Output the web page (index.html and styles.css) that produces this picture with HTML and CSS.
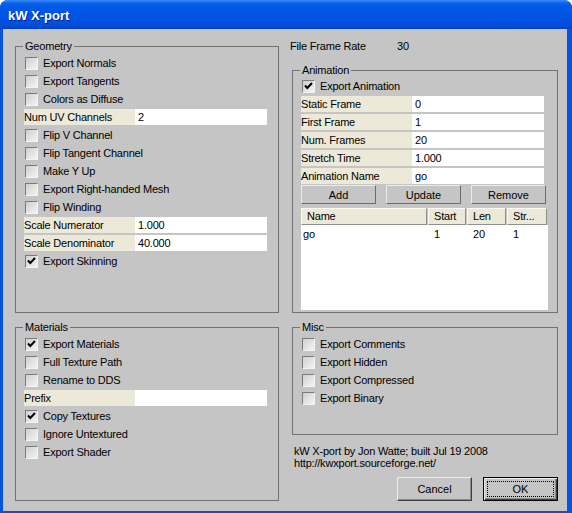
FILE: index.html
```html
<!DOCTYPE html>
<html lang="en">
<head>
    <meta charset="UTF-8">
    <title>kW X-port</title>
    <link rel="stylesheet" href="styles.css">
</head>
<body>
    <div class="window">
        <div class="titlebar"><span class="title">kW X-port</span></div>

        <div class="client">
            <div class="col col-left">
                <fieldset class="group geometry">
                    <legend>Geometry</legend>
                    <div class="check"><span class="box"></span>Export Normals</div>
                    <div class="check"><span class="box"></span>Export Tangents</div>
                    <div class="check"><span class="box"></span>Colors as Diffuse</div>
                    <div class="field"><span class="field-label">Num UV Channels</span><span class="field-input">2</span></div>
                    <div class="check"><span class="box"></span>Flip V Channel</div>
                    <div class="check"><span class="box"></span>Flip Tangent Channel</div>
                    <div class="check"><span class="box"></span>Make Y Up</div>
                    <div class="check"><span class="box"></span>Export Right-handed Mesh</div>
                    <div class="check"><span class="box"></span>Flip Winding</div>
                    <div class="field"><span class="field-label">Scale Numerator</span><span class="field-input">1.000</span></div>
                    <div class="field"><span class="field-label">Scale Denominator</span><span class="field-input">40.000</span></div>
                    <div class="check"><span class="box checked"></span>Export Skinning</div>
                </fieldset>

                <fieldset class="group materials">
                    <legend>Materials</legend>
                    <div class="check"><span class="box checked"></span>Export Materials</div>
                    <div class="check"><span class="box"></span>Full Texture Path</div>
                    <div class="check"><span class="box"></span>Rename to DDS</div>
                    <div class="field"><span class="field-label">Prefix</span><span class="field-input"></span></div>
                    <div class="check"><span class="box checked"></span>Copy Textures</div>
                    <div class="check"><span class="box"></span>Ignore Untextured</div>
                    <div class="check"><span class="box"></span>Export Shader</div>
                </fieldset>
            </div>

            <div class="col col-right">
                <div class="frame-rate"><span class="fr-label">File Frame Rate</span><span>30</span></div>

                <fieldset class="group animation">
                    <legend>Animation</legend>
                    <div class="check"><span class="box checked"></span>Export Animation</div>
                    <div class="field"><span class="field-label">Static Frame</span><span class="field-input">0</span></div>
                    <div class="field"><span class="field-label">First Frame</span><span class="field-input">1</span></div>
                    <div class="field"><span class="field-label">Num. Frames</span><span class="field-input">20</span></div>
                    <div class="field"><span class="field-label">Stretch Time</span><span class="field-input">1.000</span></div>
                    <div class="field"><span class="field-label">Animation Name</span><span class="field-input">go</span></div>
                    <div class="btn-row">
                        <button class="btn">Add</button>
                        <button class="btn">Update</button>
                        <button class="btn">Remove</button>
                    </div>
                    <div class="list">
                        <div class="list-head">
                            <span>Name</span><span>Start</span><span>Len</span><span>Str...</span>
                        </div>
                        <div class="list-row">
                            <span class="c-name">go</span><span>1</span><span>20</span><span>1</span>
                        </div>
                    </div>
                </fieldset>

                <fieldset class="group misc">
                    <legend>Misc</legend>
                    <div class="check"><span class="box"></span>Export Comments</div>
                    <div class="check"><span class="box"></span>Export Hidden</div>
                    <div class="check"><span class="box"></span>Export Compressed</div>
                    <div class="check"><span class="box"></span>Export Binary</div>
                </fieldset>

                <div class="about">kW X-port by Jon Watte; built Jul 19 2008<br>http://kwxport.sourceforge.net/</div>

                <div class="dlg-buttons">
                    <button class="btn btn-lg">Cancel</button>
                    <button class="btn btn-lg btn-default"><span class="focus">OK</span></button>
                </div>
            </div>
        </div>
    </div>
</body>
</html>
```

FILE: styles.css
```css
* {
    box-sizing: border-box;
}

body {
    margin: 0;
    font-family: "Liberation Sans", Arial, sans-serif;
    font-size: 11px;
    letter-spacing: -0.2px;
    color: #000;
    background: #fff;
}

.window {
    display: flex;
    flex-direction: column;
    width: 572px;
    height: 513px;
    background: #0553e0;
    border-radius: 8px 8px 0 0;
    overflow: hidden;
}

.titlebar {
    height: 29px;
    padding-left: 8px;
    display: flex;
    align-items: center;
    background: linear-gradient(#3b8dff 0, #0d64e6 3px, #0058ea 7px, #0054e3 16px, #0050dc 24px, #0043c4 29px);
}

.title {
    color: #fff;
    font-weight: bold;
    font-size: 13px;
    letter-spacing: 0;
    text-shadow: 1px 1px #0a1e8c;
    margin-top: 2px;
}

.client {
    flex: 1;
    display: flex;
    margin: 0 5px 2px 3px;
    padding: 11px 0 0 12px;
    background: #c5c5c5;
    gap: 11px;
}

.col {
    display: flex;
    flex-direction: column;
}

.col-left {
    width: 264px;
}

.col-right {
    width: 268px;
}

/* group boxes */
.group {
    margin: 0;
    padding: 1px 8px 0 8px;
    border: 1px solid #727272;
    min-width: 0;
}

.group legend {
    padding: 0 2px;
    margin-left: -1px;
    height: 13px;
    line-height: 13px;
}

.geometry {
    height: 273px;
}

.materials {
    height: 180px;
    margin-top: 8px;
}

.animation {
    height: 249px;
    margin-left: 2px;
    padding-top: 0;
}

.misc {
    height: 114px;
    margin: 8px 0 0 2px;
}

/* checkbox rows */
.check {
    display: flex;
    align-items: center;
    height: 18px;
}

.box {
    width: 13px;
    height: 13px;
    margin: 0 5px 0 1px;
    border: 1px solid;
    border-color: #7b7b7b #f4f4f4 #f4f4f4 #7b7b7b;
    background: linear-gradient(135deg, #cfcfcf, #e9e9e9 70%, #f1f1f1);
}

.box.checked {
    background: url("data:image/svg+xml,%3Csvg xmlns='http://www.w3.org/2000/svg' width='11' height='11'%3E%3Cpath d='M2 4.5 L4.3 7 L9 2' fill='none' stroke='%23000' stroke-width='2'/%3E%3C/svg%3E") no-repeat center, linear-gradient(135deg, #cfcfcf, #e9e9e9 70%, #f1f1f1);
}

/* label + edit rows */
.field {
    display: flex;
    height: 18px;
    padding: 1px 0;
    line-height: 16px;
}

.field-label {
    width: 111px;
    background: #ece9d8;
}

.field-input {
    width: 132px;
    padding-left: 3px;
    background: #fff;
}

/* buttons */
.btn {
    font: inherit;
    color: #000;
    width: 75px;
    height: 19px;
    padding: 0;
    background: #c5c5c5;
    border: 1px solid;
    border-color: #ebebeb #6c6c6c #6c6c6c #ebebeb;
}

.btn-row {
    display: flex;
    gap: 10px;
}

.btn-lg {
    height: 24px;
    border-color: #ececec #404040 #404040 #ececec;
    box-shadow: inset -1px -1px #8a8a8a;
}

.btn-default {
    border: 1px solid #000;
    box-shadow: inset 1px 1px #ececec, inset -1px -1px #404040, inset -2px -2px #8a8a8a;
    padding: 3px;
}

.btn-default .focus {
    display: block;
    height: 100%;
    line-height: 14px;
    border: 1px dotted #000;
}

/* list view */
.list {
    margin-top: 4px;
    width: 247px;
    height: 102px;
    background: #fff;
}

.list-head,
.list-row {
    display: grid;
    grid-template-columns: 127px 39px 40px 41px;
}

.list-head {
    height: 17px;
    background: #c5c5c5;
}

.list-head span {
    padding-left: 5px;
    line-height: 15px;
    background: #ece9d8;
    border: 1px solid;
    border-color: #fbfaf5 #8f8f8f #8f8f8f #fbfaf5;
    margin-right: 1px;
}

.list-row {
    height: 18px;
    line-height: 18px;
}

.list-row span {
    padding-left: 6px;
}

.list-row .c-name {
    padding-left: 2px;
}

/* bottom of right column */
.frame-rate {
    display: flex;
    height: 13px;
    line-height: 13px;
    margin-bottom: 11px;
}

.fr-label {
    width: 107px;
}

.about {
    margin-top: 10px;
    padding-left: 4px;
    line-height: 12px;
}

.dlg-buttons {
    display: flex;
    gap: 11px;
    margin-top: 8px;
    padding-left: 107px;
}
```
